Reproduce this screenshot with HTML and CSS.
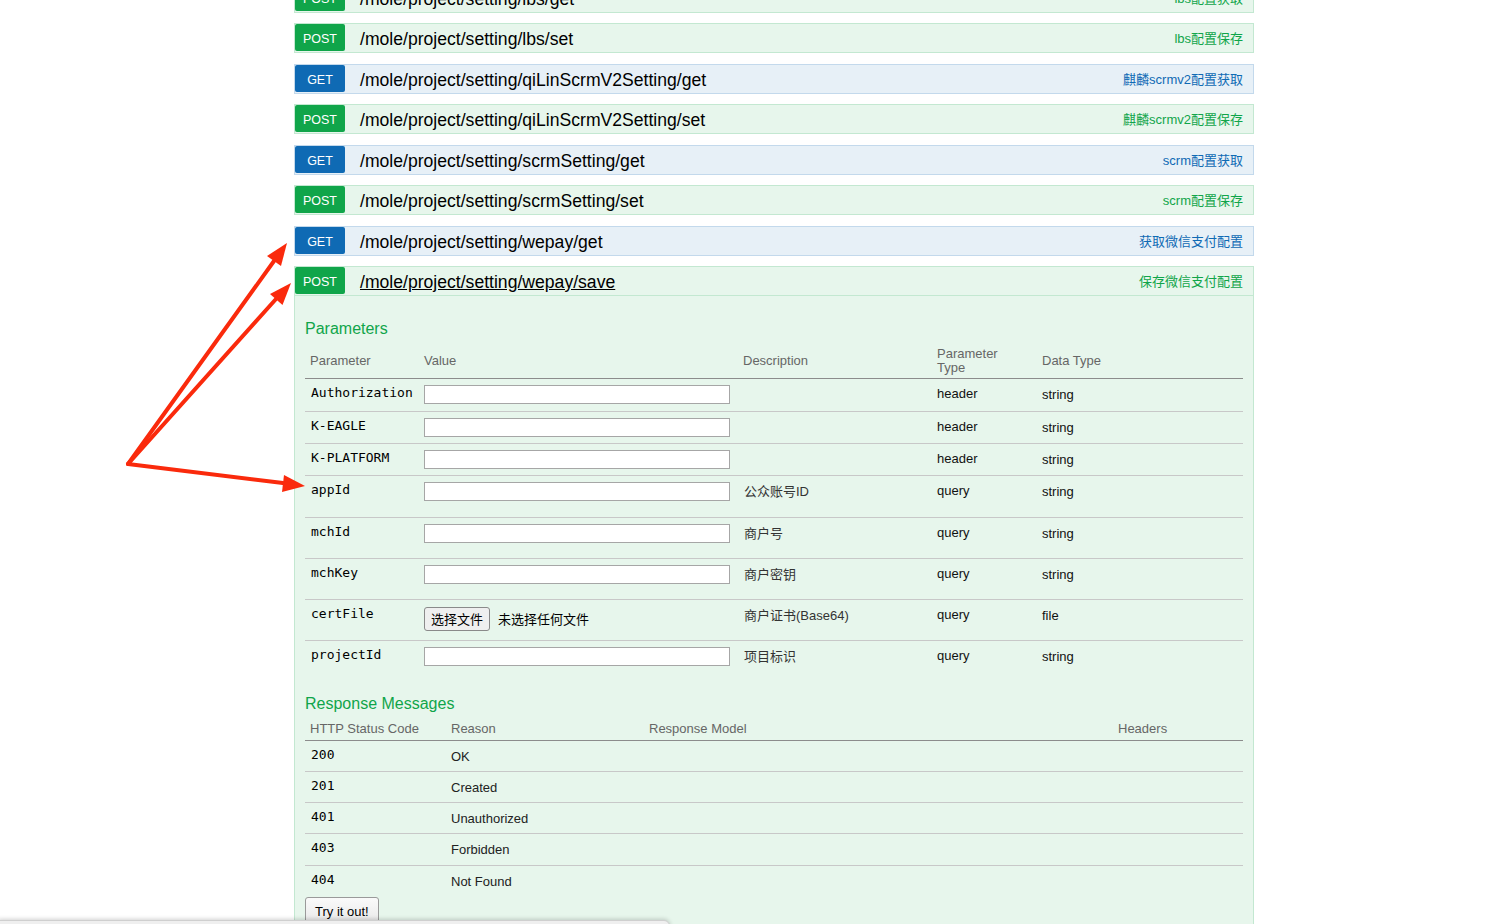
FILE: index.html
```html
<!DOCTYPE html>
<html lang="zh-CN">
<head>
<meta charset="utf-8">
<title>Swagger</title>
<link rel="stylesheet" href="styles.css">
</head>
<body>
<div class="wrap">
  <ul class="endpoints">
    <li class="op post">
      <div class="heading"><span class="method">POST</span><span class="path">/mole/project/setting/lbs/get</span><span class="summary">lbs配置获取</span></div>
    </li>
    <li class="op post">
      <div class="heading"><span class="method">POST</span><span class="path">/mole/project/setting/lbs/set</span><span class="summary">lbs配置保存</span></div>
    </li>
    <li class="op get">
      <div class="heading"><span class="method">GET</span><span class="path">/mole/project/setting/qiLinScrmV2Setting/get</span><span class="summary">麒麟scrmv2配置获取</span></div>
    </li>
    <li class="op post">
      <div class="heading"><span class="method">POST</span><span class="path">/mole/project/setting/qiLinScrmV2Setting/set</span><span class="summary">麒麟scrmv2配置保存</span></div>
    </li>
    <li class="op get">
      <div class="heading"><span class="method">GET</span><span class="path">/mole/project/setting/scrmSetting/get</span><span class="summary">scrm配置获取</span></div>
    </li>
    <li class="op post">
      <div class="heading"><span class="method">POST</span><span class="path">/mole/project/setting/scrmSetting/set</span><span class="summary">scrm配置保存</span></div>
    </li>
    <li class="op get">
      <div class="heading"><span class="method">GET</span><span class="path">/mole/project/setting/wepay/get</span><span class="summary">获取微信支付配置</span></div>
    </li>
    <li class="op post open">
      <div class="heading"><span class="method">POST</span><span class="path link">/mole/project/setting/wepay/save</span><span class="summary">保存微信支付配置</span></div>
      <div class="content">
        <h4 class="sec-title">Parameters</h4>
        <table class="params">
          <colgroup><col class="c1"><col class="c2"><col class="c3"><col class="c4"><col class="c5"></colgroup>
          <thead>
            <tr><th>Parameter</th><th>Value</th><th>Description</th><th><span class="wrap-th">Parameter Type</span></th><th>Data Type</th></tr>
          </thead>
          <tbody>
            <tr class="h33"><td class="code">Authorization</td><td><input class="txt" type="text"></td><td class="desc"></td><td class="meta">header</td><td class="meta2">string</td></tr>
            <tr class="h32"><td class="code">K-EAGLE</td><td><input class="txt" type="text"></td><td class="desc"></td><td class="meta">header</td><td class="meta2">string</td></tr>
            <tr class="h32"><td class="code">K-PLATFORM</td><td><input class="txt" type="text"></td><td class="desc"></td><td class="meta">header</td><td class="meta2">string</td></tr>
            <tr class="h42"><td class="code">appId</td><td><input class="txt" type="text"></td><td class="desc">公众账号ID</td><td class="meta">query</td><td class="meta2">string</td></tr>
            <tr class="h41"><td class="code">mchId</td><td><input class="txt" type="text"></td><td class="desc">商户号</td><td class="meta">query</td><td class="meta2">string</td></tr>
            <tr class="h41"><td class="code">mchKey</td><td><input class="txt" type="text"></td><td class="desc">商户密钥</td><td class="meta">query</td><td class="meta2">string</td></tr>
            <tr class="h41"><td class="code">certFile</td><td><div class="file"><span class="file-btn">选择文件</span><span class="file-name">未选择任何文件</span></div></td><td class="desc">商户证书(Base64)</td><td class="meta">query</td><td class="meta2">file</td></tr>
            <tr class="h41"><td class="code">projectId</td><td><input class="txt" type="text"></td><td class="desc">项目标识</td><td class="meta">query</td><td class="meta2">string</td></tr>
          </tbody>
        </table>
        <h4 class="sec-title resp-title">Response Messages</h4>
        <table class="resp">
          <colgroup><col class="r1"><col class="r2"><col class="r3"><col class="r4"></colgroup>
          <thead>
            <tr><th>HTTP Status Code</th><th>Reason</th><th>Response Model</th><th>Headers</th></tr>
          </thead>
          <tbody>
            <tr class="h31"><td class="code">200</td><td class="reason">OK</td><td></td><td></td></tr>
            <tr class="h31"><td class="code">201</td><td class="reason">Created</td><td></td><td></td></tr>
            <tr class="h31"><td class="code">401</td><td class="reason">Unauthorized</td><td></td><td></td></tr>
            <tr class="h32"><td class="code">403</td><td class="reason">Forbidden</td><td></td><td></td></tr>
            <tr class="h31"><td class="code">404</td><td class="reason">Not Found</td><td></td><td></td></tr>
          </tbody>
        </table>
        <button class="try" type="button">Try it out!</button>
      </div>
    </li>
  </ul>
</div>

<svg class="arrows" width="1486" height="924" viewBox="0 0 1486 924" xmlns="http://www.w3.org/2000/svg">
  <g stroke="#fa2a0c" stroke-width="4" stroke-linecap="round" fill="none">
    <line x1="128" y1="464" x2="274" y2="261"/>
    <line x1="128" y1="464" x2="276" y2="299"/>
    <line x1="128" y1="464" x2="283" y2="483"/>
  </g>
  <g fill="#fa2a0c">
    <polygon points="287,243 281,266 267,256"/>
    <polygon points="291,283 282.5,305 270,294"/>
    <polygon points="305,486 282,492 284,475"/>
  </g>
</svg>

<div class="bottom-bar"></div>
</body>
</html>
```

FILE: styles.css
```css
html, body {
  margin: 0;
  padding: 0;
  background: #ffffff;
}

body {
  font-family: "Liberation Sans", Arial, "Noto Sans CJK SC", sans-serif;
  color: #000;
  width: 1486px;
  height: 924px;
  overflow: hidden;
  position: relative;
}

.wrap {
  margin: -17.5px 0 0 294px;
  width: 960px;
}

.endpoints {
  list-style: none;
  margin: 0;
  padding: 0;
}

.op {
  margin: 0 0 10.5px 0;
}

.heading {
  display: flex;
  align-items: flex-start;
  height: 30px;
  box-sizing: border-box;
  border: 1px solid;
}

.post .heading {
  background: #e7f6ec;
  border-color: #c3e8d1;
}

.get .heading {
  background: #e7f0f7;
  border-color: #c3d9ec;
}

.method {
  width: 50px;
  height: 24px;
  padding-top: 3px;
  line-height: 24px;
  text-align: center;
  color: #fff;
  font-size: 12.5px;
  border-radius: 2px;
  flex: none;
}

.post .method { background: #10a54a; }
.get .method { background: #0f6ab4; }

.path {
  margin-left: 15px;
  font-size: 17.6px;
  line-height: 30px;
  color: #000;
  white-space: nowrap;
}

.path.link {
  text-decoration: underline;
}

.summary {
  margin-left: auto;
  padding-right: 10px;
  font-size: 13px;
  line-height: 30px;
  white-space: nowrap;
}

.post .summary { color: #10a54a; }
.get .summary { color: #0f6ab4; }

.content {
  background: #e7f6ec;
  border: 1px solid #c3e8d1;
  border-top: none;
  padding: 23px 10px 20px 10px;
}

.sec-title {
  margin: 0;
  font-size: 16px;
  line-height: 20px;
  font-weight: normal;
  color: #10a54a;
}

.resp-title {
  margin-top: 12px;
}

table {
  border-collapse: separate;
  border-spacing: 0;
  table-layout: fixed;
  width: 938px;
  font-size: 13px;
}

.params {
  margin-top: 5px;
}

.params .c1 { width: 114px; }
.params .c2 { width: 319px; }
.params .c3 { width: 194px; }
.params .c4 { width: 105px; }
.params .c5 { width: 206px; }

.resp .r1 { width: 141px; }
.resp .r2 { width: 198px; }
.resp .r3 { width: 469px; }
.resp .r4 { width: 130px; }

th {
  text-align: left;
  font-weight: normal;
  color: #666;
  font-size: 13px;
  line-height: 14px;
  vertical-align: middle;
  border-bottom: 1px solid #8c8c8c;
}

.params th {
  padding: 3px 5px 3px 5px;
}

.resp th {
  padding: 8px 5px 4px 5px;
}

.wrap-th {
  display: block;
  width: 70px;
}

td {
  vertical-align: top;
  padding: 6px 5px 0 5px;
  line-height: 15px;
  border-bottom: 1px solid #c8c8c8;
  color: #111;
}

tbody tr:last-child td {
  border-bottom: none;
}

.h31 { height: 31px; }
.h32 { height: 32px; }
.h33 { height: 33px; }
.h41 { height: 41px; }
.h42 { height: 42px; }

td.code {
  font-family: "DejaVu Sans Mono", "Liberation Mono", monospace;
  font-size: 13px;
  color: #000;
  padding-left: 6px;
}

td.desc {
  padding-top: 8px;
  padding-left: 6px;
  color: #333;
}

td.meta {
  padding-top: 7px;
}

td.meta2 {
  padding-top: 8px;
}

td.reason {
  padding-top: 8px;
  color: #222;
}

.txt {
  display: block;
  width: 306px;
  height: 19px;
  box-sizing: border-box;
  border: 1px solid #a6a6a6;
  background: #fff;
  margin: 0;
  padding: 0 2px;
  font-size: 13px;
}

.file {
  display: flex;
  align-items: center;
  gap: 8px;
  font-family: "Noto Sans CJK SC", sans-serif;
  font-size: 13px;
}

.file-btn {
  display: block;
  height: 24px;
  line-height: 22px;
  box-sizing: border-box;
  padding: 0 6px;
  border: 1px solid #8a8a8a;
  border-radius: 3px;
  background: #efefef;
  color: #000;
  margin-top: 1px;
}

.file-name {
  color: #000;
}

.try {
  display: block;
  margin-top: 0;
  height: 28px;
  padding: 0 9px;
  font-family: "Liberation Sans", Arial, sans-serif;
  font-size: 13px;
  color: #000;
  border: 1px solid #9a9a9a;
  border-radius: 3px;
  background: linear-gradient(#fafafa, #e8e8e8);
}

.arrows {
  position: absolute;
  left: 0;
  top: 0;
  pointer-events: none;
}

.bottom-bar {
  position: absolute;
  left: -2px;
  top: 920px;
  width: 670px;
  height: 20px;
  background: #efefef;
  border: 1px solid #cfcfcf;
  border-radius: 0 6px 0 0;
  box-shadow: 0 -1px 4px rgba(0, 0, 0, 0.18);
}
```
